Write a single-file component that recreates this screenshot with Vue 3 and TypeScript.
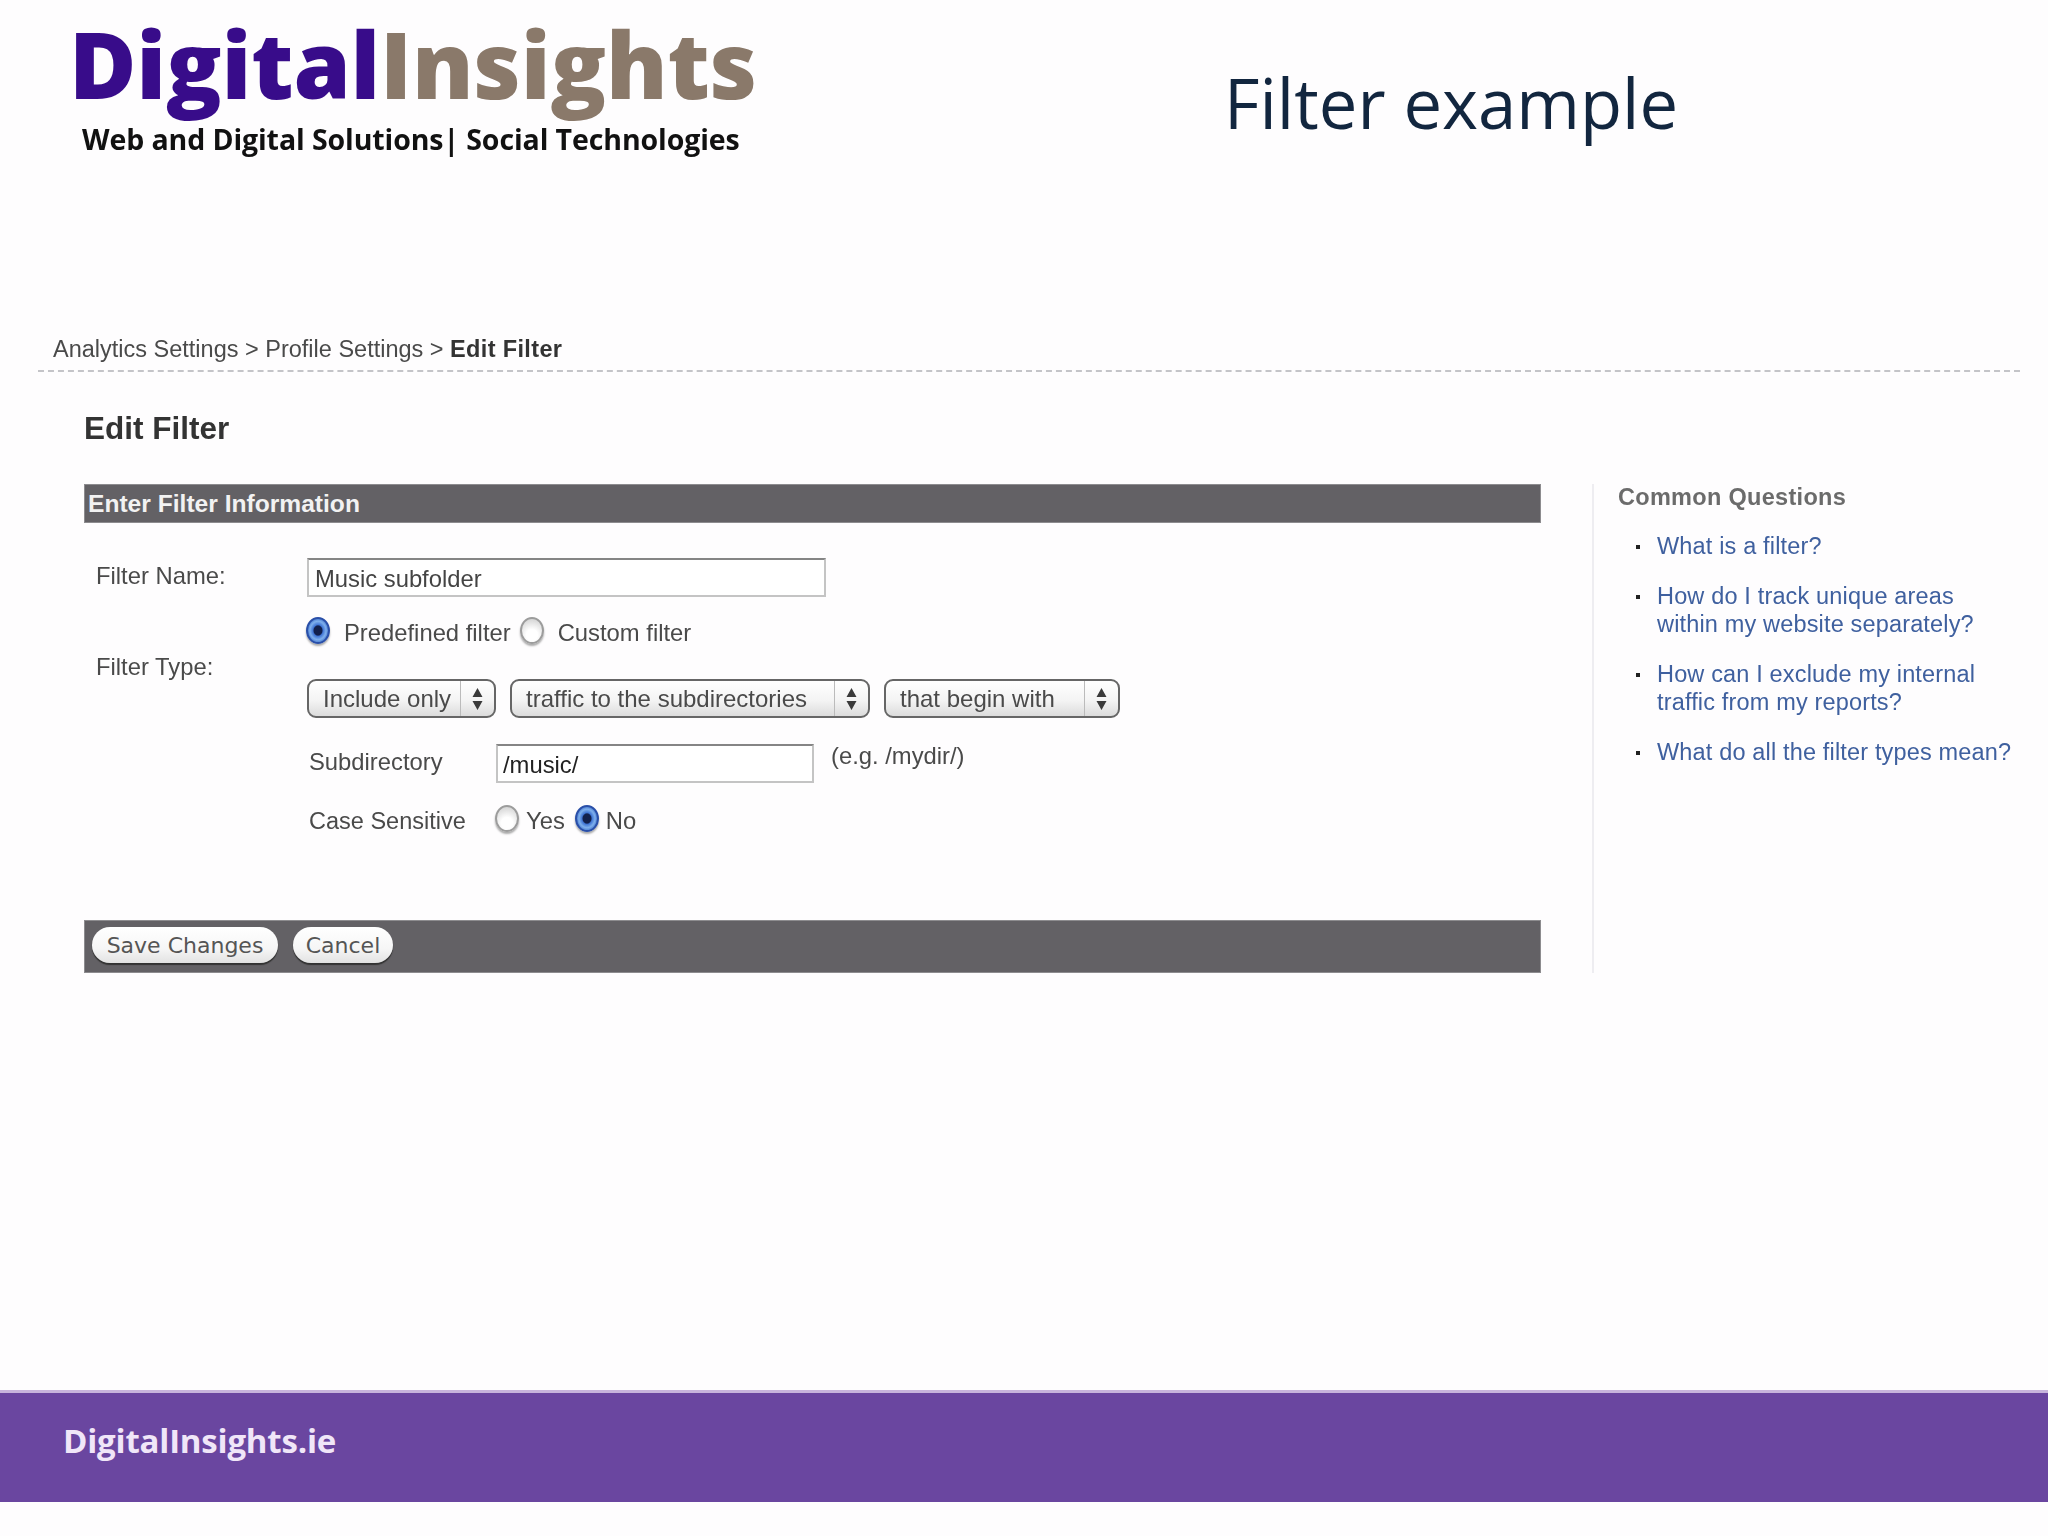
<script setup lang="ts">
interface Question { id: number; lines: string[] }
const questions: Question[] = [
  { id: 1, lines: ['What is a filter?'] },
  { id: 2, lines: ['How do I track unique areas', 'within my website separately?'] },
  { id: 3, lines: ['How can I exclude my internal', 'traffic from my reports?'] },
  { id: 4, lines: ['What do all the filter types mean?'] },
]
const selects = [
  { id: 'a', label: 'Include only', cls: 'sel-a' },
  { id: 'b', label: 'traffic to the subdirectories', cls: 'sel-b' },
  { id: 'c', label: 'that begin with', cls: 'sel-c' },
]
</script>

<template>
  <div class="slide">
    <header class="top">
      <div class="logo">
        <div class="logo-main"><span class="purple">Digital</span><span class="taupe">Insights</span></div>
        <div class="logo-tag">Web and Digital Solutions| Social Technologies</div>
      </div>
      <h1 class="title">Filter example</h1>
    </header>

    <nav class="crumbs">Analytics Settings &gt; Profile Settings &gt; <b>Edit Filter</b></nav>

    <main class="content">
      <h2 class="page-title">Edit Filter</h2>
      <div class="columns">
        <section class="panel">
          <div class="bar bar-head">Enter Filter Information</div>
          <div class="form">
            <div class="row-name">
              <span class="label label-name">Filter Name:</span>
              <div class="input input-name">Music subfolder</div>
            </div>
            <div class="row-type">
              <span class="label label-type">Filter Type:</span>
              <div class="type-body">
                <div class="radios">
                  <span class="radio on"></span><span class="r-a">Predefined filter</span>
                  <span class="radio"></span><span class="r-b">Custom filter</span>
                </div>
                <div class="selects">
                  <div v-for="s in selects" :key="s.id" class="select" :class="s.cls">
                    <span class="sel-text">{{ s.label }}</span>
                    <span class="sel-arrows">
                      <svg width="13" height="22" viewBox="0 0 13 22"><path d="M6.5 0 L11.5 9 H1.5 Z M6.5 22 L11.5 13 H1.5 Z" fill="#3a3a3a" /></svg>
                    </span>
                  </div>
                </div>
                <div class="sub-row">
                  <span class="sub-label">Subdirectory</span>
                  <div class="input input-sub">/music/</div>
                  <span class="hint">(e.g. /mydir/)</span>
                </div>
                <div class="case-row">
                  <span class="sub-label">Case Sensitive</span>
                  <span class="radio"></span><span class="r-yes">Yes</span>
                  <span class="radio on"></span><span class="r-no">No</span>
                </div>
              </div>
            </div>
          </div>
          <div class="bar bar-foot">
            <span class="btn btn-save">Save Changes</span>
            <span class="btn btn-cancel">Cancel</span>
          </div>
        </section>
        <aside class="side">
          <h3 class="side-title">Common Questions</h3>
          <ul class="side-list">
            <li v-for="q in questions" :key="q.id">
              <a v-for="l in q.lines" :key="l" class="q-line">{{ l }}</a>
            </li>
          </ul>
        </aside>
      </div>
    </main>

    <footer class="foot">DigitalInsights.ie</footer>
  </div>
</template>

<style>
html, body { margin: 0; background: #fff; }
</style>

<style scoped>
.slide {
  width: 2048px; height: 1536px; display: flex; flex-direction: column;
  background: #fefdfe; font-family: "Liberation Sans", Arial, sans-serif; color: #444;
  box-sizing: border-box; padding-bottom: 34px; overflow: hidden;
}
.top { height: 319px; display: flex; align-items: flex-start; flex: none; }
.logo { width: 1224px; flex: none; box-sizing: border-box; padding: 3px 0 0 69px; font-family: "Open Sans", sans-serif; font-weight: 800; filter: blur(0.6px); }
.logo-main { font-size: 92px; line-height: 122px; letter-spacing: -0.2px; white-space: nowrap; }
.purple { color: #380c8a; }
.taupe { color: #8a796a; }
.logo-tag { font-size: 28.5px; line-height: 36px; font-weight: 700; letter-spacing: -0.1px; color: #111; margin: -4px 0 0 13px; white-space: nowrap; }
.title { margin: 54px 0 0; font: 400 68.8px/96px "Open Sans", sans-serif; color: #12263f; white-space: nowrap; }

.crumbs { margin-left: 38px; width: 1982px; padding: 17px 0 7px 15px; box-sizing: border-box; font-size: 23.5px; line-height: 27px; color: #4a4a4a; border-bottom: 2px dashed #c4c4c8; flex: none; filter: blur(0.4px); }
.crumbs b { color: #333; letter-spacing: 0.35px; }

.content { padding: 0 7px 0 84px; flex: none; }
.page-title { margin: 0 0 38px; padding-top: 38px; font-size: 31.5px; line-height: 36px; height: 36px; font-weight: 700; color: #333; filter: blur(0.4px); }

.columns { display: flex; align-items: stretch; }
.panel { width: 1457px; flex: none; }
.bar { background: #636165; box-shadow: inset 0 0 0 1px #8d8c8f; }
.bar-head { height: 39px; line-height: 39px; padding-left: 4px; font-size: 24.6px; font-weight: 700; color: #f2f2f2; }

.form { height: 397px; box-sizing: border-box; padding: 35px 0 0 12px; font-size: 23.8px; filter: blur(0.35px); }
.label { width: 211px; flex: none; color: #4a4a4a; line-height: 32px; }
.label-name { margin-top: 2px; }
.row-name { display: flex; align-items: flex-start; }
.input { box-sizing: border-box; background: #fff; border: 2px solid #c4c4c4; border-top-color: #858585; color: #444; line-height: 37px; white-space: nowrap; }
.input-name { width: 519px; height: 39px; padding-left: 6px; }
.row-type { display: flex; align-items: flex-start; }
.label-type { margin-top: 54px; }
.type-body { display: flex; flex-direction: column; }

.radio {
  width: 24px; height: 27px; border-radius: 50%; box-sizing: border-box; flex: none; display: inline-block;
  border: 2px solid #9c9c9c; background: radial-gradient(circle at 50% 70%, #fff 30%, #d5d5d5 85%);
  box-shadow: 0 2px 2px #aaa; margin-top: -5px;
}
.radio.on {
  border-color: #2a4fa8; background: radial-gradient(ellipse at 50% 50%, #12204c 0 4px, #3f74d4 5px, #7fb0ec 8px, #2b5dc0 12px);
}
.radios { display: flex; align-items: center; height: 36px; margin: 18px 0 0 -1px; color: #4a4a4a; }
.r-a { margin-left: 14px; margin-right: 9px; }
.r-b { margin-left: 14px; }

.selects { display: flex; gap: 14px; margin-top: 28px; font-size: 24px; }
.select {
  height: 39px; box-sizing: border-box; display: flex; border: 2px solid #666; border-radius: 9px;
  background: linear-gradient(#fff, #f4f4f4 55%, #dcdcdc); color: #4a4a4a;
}
.sel-a { width: 189px; }
.sel-b { width: 360px; }
.sel-c { width: 236px; }
.sel-text { flex: 1; padding-left: 14px; line-height: 35px; white-space: nowrap; }
.sel-arrows { width: 33px; flex: none; border-left: 1px solid #bbb; display: flex; align-items: center; justify-content: center; }

.sub-row { display: flex; align-items: flex-start; margin-top: 26px; padding-left: 2px; color: #4a4a4a; }
.sub-label { width: 187px; flex: none; line-height: 36px; }
.input-sub { width: 318px; height: 39px; padding-left: 5px; color: #222; }
.hint { margin-left: 17px; line-height: 24px; }
.case-row { display: flex; align-items: center; height: 36px; margin-top: 20px; padding-left: 2px; color: #4a4a4a; }
.case-row .sub-label { width: 186px; font-size: 23.5px; }
.r-yes { margin-left: 7px; margin-right: 10px; }
.r-no { margin-left: 7px; }

.bar-foot { height: 53px; display: flex; align-items: center; gap: 15px; padding: 0 0 3px 8px; box-sizing: border-box; }
.btn {
  height: 36px; box-sizing: border-box; border-radius: 18px; background: linear-gradient(#fff, #f6f6f6 60%, #e2e2e2);
  font-family: "DejaVu Sans", sans-serif; font-size: 22px; line-height: 38px; text-align: center; color: #555;
  box-shadow: 0 2px 1px #333; white-space: nowrap;
}
.btn-save { width: 186px; }
.btn-cancel { width: 100px; }

.side { margin-left: 51px; border-left: 2px solid #eeedf1; padding: 0 0 0 24px; flex: 1; min-width: 0; filter: blur(0.35px); }
.side-title { margin: -1px 0 0; font-size: 23.5px; line-height: 28px; font-weight: 700; color: #6b6b6b; letter-spacing: 0.3px; }
.side-list { list-style: none; margin: 21px 0 0; padding: 0; }
.side-list li { position: relative; padding-left: 39px; margin-bottom: 22px; }
.side-list li::before { content: ""; position: absolute; left: 18px; top: 13px; width: 4px; height: 4px; background: #222; }
.q-line { display: block; font-size: 23.5px; line-height: 28px; color: #3f609f; white-space: nowrap; letter-spacing: 0.16px; }

.foot {
  margin-top: auto; height: 112px; flex: none; box-sizing: border-box; padding: 23px 0 0 63px;
  background: #6a46a0; border-top: 3px solid #c7b4dc;
  font: 700 33px/50px "Open Sans", sans-serif; letter-spacing: -0.2px; color: #f0e6f8;
}
</style>
